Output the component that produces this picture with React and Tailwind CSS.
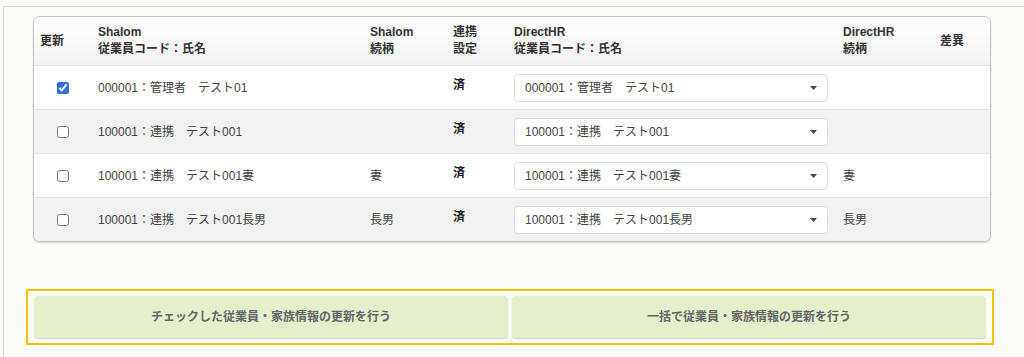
import { useState } from "react";

const rows = [
  { id: 1, name: "000001：管理者　テスト01", rel: "", hrName: "000001：管理者　テスト01", hrRel: "", checked: true },
  { id: 2, name: "100001：連携　テスト001", rel: "", hrName: "100001：連携　テスト001", hrRel: "", checked: false },
  { id: 3, name: "100001：連携　テスト001妻", rel: "妻", hrName: "100001：連携　テスト001妻", hrRel: "妻", checked: false },
  { id: 4, name: "100001：連携　テスト001長男", rel: "長男", hrName: "100001：連携　テスト001長男", hrRel: "長男", checked: false }
];

const cols = "grid grid-cols-[57px_272px_83px_61px_329px_97px_1fr]";

const Caret = () => (
  <svg width="7" height="4" viewBox="0 0 7 4" className="shrink-0">
    <path d="M0 0h7L3.5 4z" fill="#444" />
  </svg>
);

const App = () => {
  const [checked, setChecked] = useState(rows.map((r) => r.checked));

  return (
    <div className="min-h-[357px] bg-[#fbfdf6] pt-[6px] pl-[3px] font-['Liberation_Sans','Noto_Sans_CJK_JP',sans-serif] text-[12px] text-[#333]">
      <div className="min-h-[351px] border-t border-l border-[#d4d4d4] pr-[30px] pl-[22px]">
        <div className="mt-[9px] mr-[3px] ml-[7px] overflow-hidden rounded-[7px] border border-[#c6c6c6] bg-white shadow-[0_1px_2px_rgba(0,0,0,0.18)]">
          <div className={`${cols} h-[48px] items-center bg-gradient-to-b from-white to-[#f3f3f3] font-bold leading-[17px] text-[#333]`}>
            <div className="pl-[6px]">更新</div>
            <div className="pl-[7px]">
              Shalom
              <br />
              従業員コード：氏名
            </div>
            <div className="pl-[7px]">
              Shalom
              <br />
              続柄
            </div>
            <div className="pl-[7px]">
              連携
              <br />
              設定
            </div>
            <div className="pl-[7px]">
              DirectHR
              <br />
              従業員コード：氏名
            </div>
            <div className="pl-[7px]">
              DirectHR
              <br />
              続柄
            </div>
            <div className="pl-[7px]">差異</div>
          </div>
          {rows.map((row, i) => (
            <div
              key={row.id}
              className={`${cols} h-[44px] items-center border-t border-[#e2e2e2] text-[#444] ${i % 2 === 1 ? "bg-[#f2f2f2]" : "bg-white"}`}
            >
              <div className="flex justify-center">
                <input
                  type="checkbox"
                  checked={checked[i]}
                  onChange={() => setChecked((v) => v.map((c, j) => (j === i ? !c : c)))}
                  className="h-[12px] w-[12px] accent-[#2f6fd8]"
                />
              </div>
              <div className="pl-[7px]">{row.name}</div>
              <div className="pl-[7px]">{row.rel}</div>
              <div className="-mt-[6px] pl-[7px] font-bold text-[#222]">済</div>
              <div className="pl-[7px]">
                <div className="flex h-[28px] w-[314px] items-center justify-between rounded-[4px] border border-[#dcdcdc] bg-white pr-[10px] pl-[10px]">
                  <span>{row.hrName}</span>
                  <Caret />
                </div>
              </div>
              <div className="pl-[7px]">{row.hrRel}</div>
              <div />
            </div>
          ))}
        </div>

        <div className="mt-[47px] flex gap-[4px] border-2 border-[#f6c100] px-[6px] py-[5px]">
          <button
            type="button"
            className="h-[42px] flex-1 rounded-[4px] bg-[#e4efcc] text-[12px] font-bold text-[#666] shadow-[0_1px_1px_rgba(0,0,0,0.2)]"
          >
            チェックした従業員・家族情報の更新を行う
          </button>
          <button
            type="button"
            className="h-[42px] flex-1 rounded-[4px] bg-[#e4efcc] text-[12px] font-bold text-[#666] shadow-[0_1px_1px_rgba(0,0,0,0.2)]"
          >
            一括で従業員・家族情報の更新を行う
          </button>
        </div>
      </div>
    </div>
  );
};

export default App;
